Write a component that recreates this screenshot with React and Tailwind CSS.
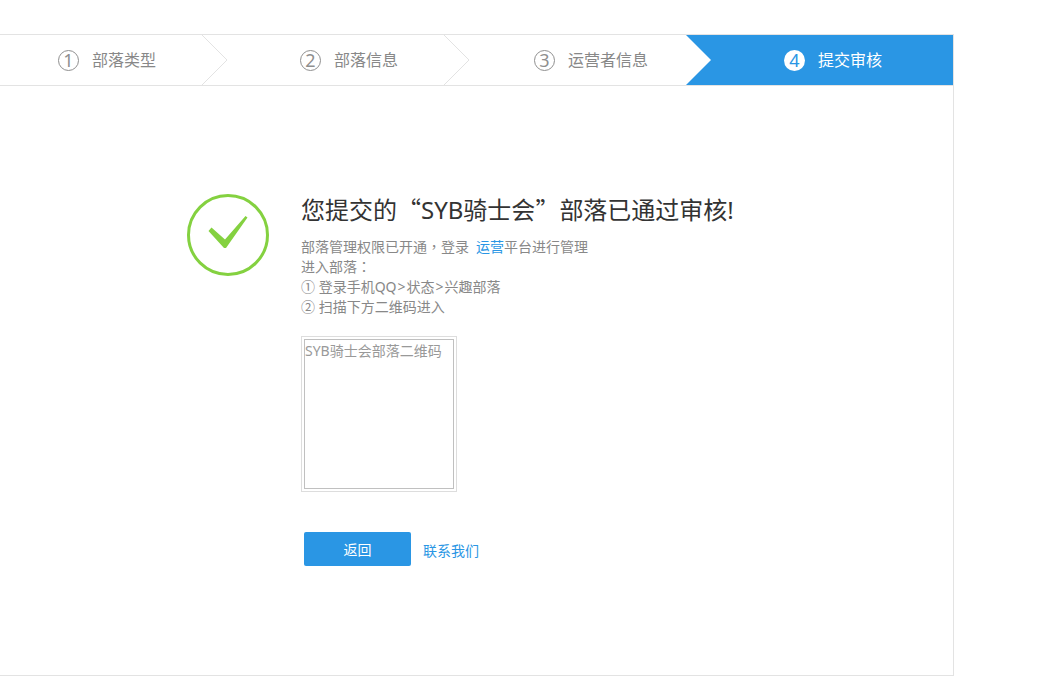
const steps = [
  { num: "1", label: "部落类型", width: "w-[242px]", pad: "pl-[58px]", chevron: true },
  { num: "2", label: "部落信息", width: "w-[242px]", pad: "pl-[58px]", chevron: true },
  { num: "3", label: "运营者信息", width: "w-[202px]", pad: "pl-[50px]", chevron: false },
];

const Chevron = () => (
  <svg className="absolute top-0 left-[202px] z-10" width="26" height="50" viewBox="0 0 26 50">
    <path d="M0 0 L25 25 L0 50" fill="none" stroke="#e3e3e3" strokeWidth="1" />
  </svg>
);

const NumCircle = ({ num }) => (
  <span className="w-[21px] h-[21px] rounded-full border border-[#8f8f8f] flex items-center justify-center text-[18px] leading-none text-[#8f8f8f]">
    {num}
  </span>
);

// centred full-width punctuation, as in the reference
const Punct = ({ children }) => <span className="leading-none font-['Noto_Sans_CJK_TC']">{children}</span>;

const Cjk = ({ children }) => <span className="leading-none font-['Noto_Sans_CJK_SC']">{children}</span>;

const App = () => {
  return (
    <div className="w-[1053px] h-[697px] bg-white pt-[34px] overflow-hidden font-['Noto_Sans','Noto_Sans_CJK_SC','Liberation_Sans',sans-serif]">
      <div className="w-[954px] h-[642px] border-r border-b border-[#e3e3e3]">
        <div className="flex h-[52px] border-y border-[#e3e3e3]">
          {steps.map((step) => (
            <div key={step.num} className={`relative flex items-center ${step.width} ${step.pad}`}>
              <NumCircle num={step.num} />
              <span className="ml-[13px] text-base text-[#888888]">{step.label}</span>
              {step.chevron && <Chevron />}
            </div>
          ))}
          <div className="relative flex-1 flex items-center pl-[98px] bg-[#2a96e4] text-white">
            <svg className="absolute top-0 left-0" width="26" height="50" viewBox="0 0 26 50">
              <path d="M0 0 L25 25 L0 50 Z" fill="#ffffff" />
            </svg>
            <span className="w-[21px] h-[21px] rounded-full bg-white flex items-center justify-center text-[18px] leading-none text-[#2a96e4]">
              4
            </span>
            <span className="ml-[13px] text-base">提交审核</span>
          </div>
        </div>

        <div className="flex pt-[108px] pl-[187px]">
          <svg width="82" height="82" viewBox="0 0 82 82" className="shrink-0">
            <circle cx="41" cy="41" r="39.5" fill="none" stroke="#84d140" strokeWidth="3" />
            <path d="M21.5 37 L24.5 33.5 L38 45.5 L58.5 22 L60.5 23.5 L39 54 L37 54 Z" fill="#84d140" />
          </svg>
          <div className="ml-[32px]">
            <h1 className="text-2xl leading-[32px] text-[#333333] font-normal">
              您提交的<Cjk>“</Cjk>SYB骑士会<Cjk>”</Cjk>部落已通过审核!
            </h1>
            <div className="mt-[11px] text-sm leading-5 text-[#888888]">
              <p>
                部落管理权限已开通<Punct>，</Punct>登录<span className="ml-[7px] text-[#2a96e4]">运营</span>平台进行管理
              </p>
              <p>
                进入部落<Punct>：</Punct>
              </p>
              <p>
                ① 登录手机QQ<span className="mx-px">&gt;</span>状态<span className="mx-px">&gt;</span>兴趣部落
              </p>
              <p>② 扫描下方二维码进入</p>
            </div>
            <div className="mt-[19px] w-[156px] h-[156px] border border-[#dddddd] p-[2px]">
              <div className="w-full h-full border border-[#c0c0c0] text-sm leading-[22px] text-[#999999] whitespace-nowrap">
                SYB骑士会部落二维码
              </div>
            </div>
            <div className="flex items-center mt-[40px] ml-[3px]">
              <button className="w-[107px] h-[34px] pt-px rounded-[2px] bg-[#2a96e4] text-white text-sm">返回</button>
              <a className="ml-[12px] mt-[4px] text-sm text-[#2a96e4]">联系我们</a>
            </div>
          </div>
        </div>
      </div>
    </div>
  );
};

export default App;
